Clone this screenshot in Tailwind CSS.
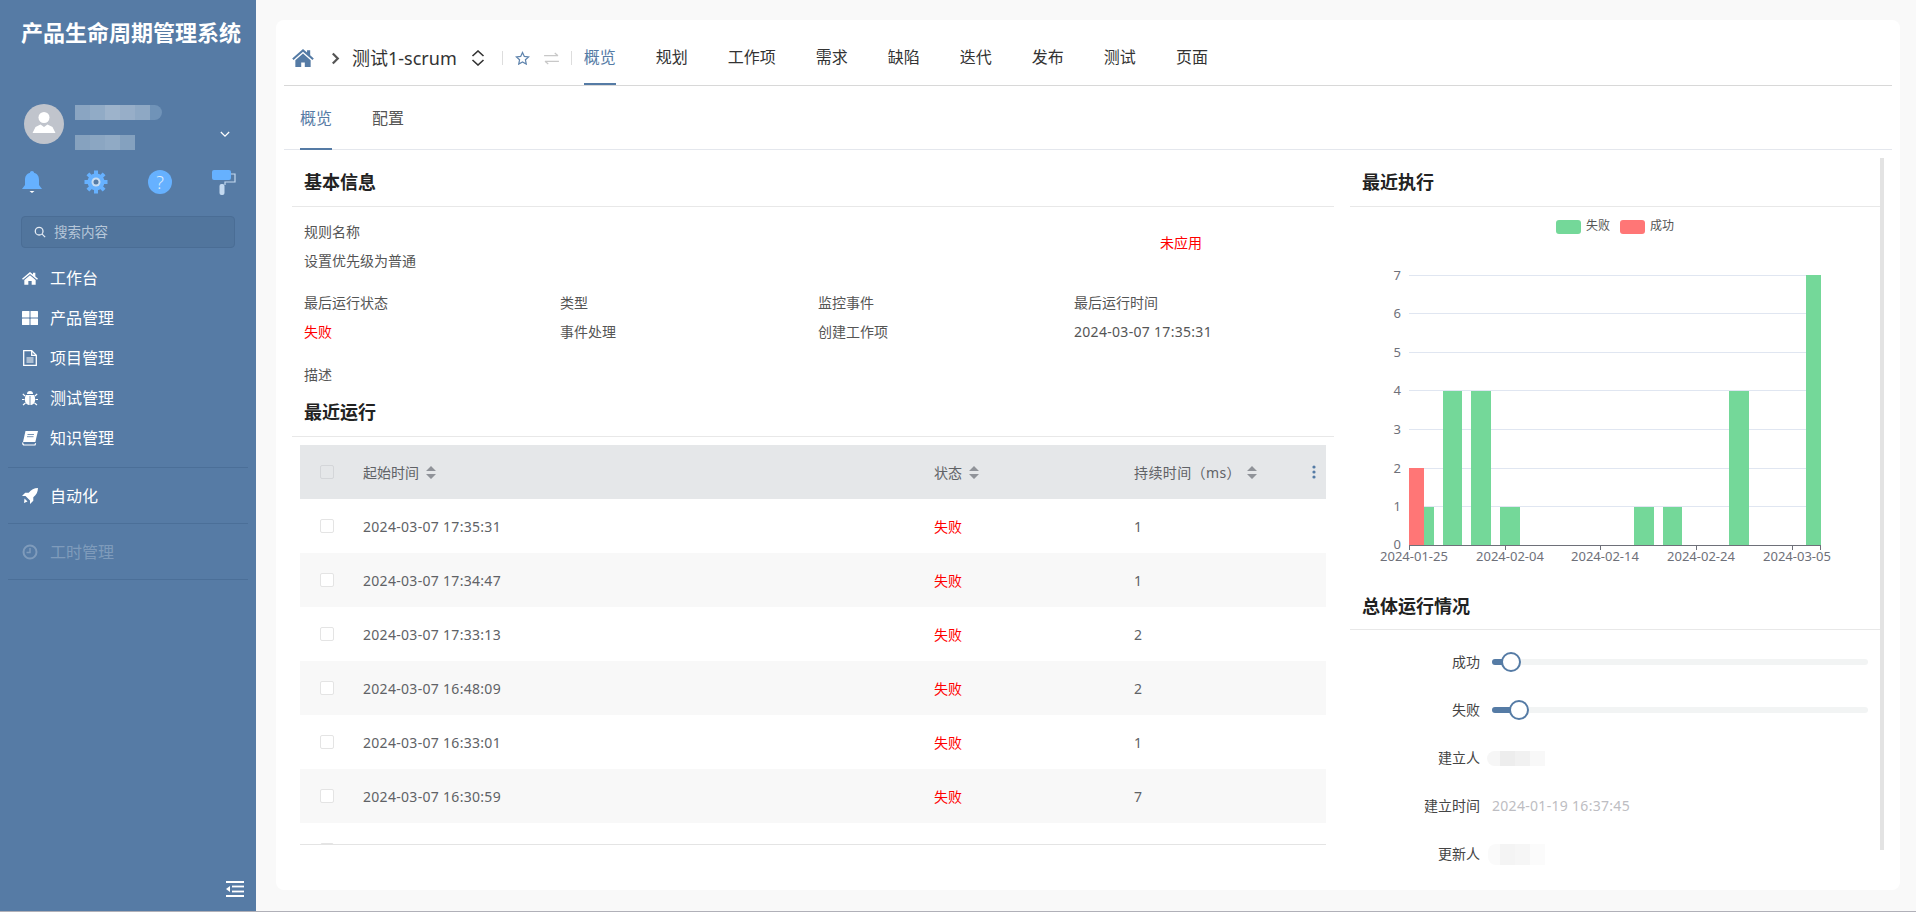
<!DOCTYPE html>
<html lang="zh-CN">
<head>
  <meta charset="UTF-8" />
  <title>产品生命周期管理系统</title>
  <script src="https://cdn.jsdelivr.net/npm/@tailwindcss/browser@4"></script>
</head>
<body class="h-screen overflow-hidden bg-[#f9f9f9] font-['Noto_Sans','Noto_Sans_CJK_SC',sans-serif] text-[14px] text-[#606266]">
<div class="flex h-[912px] border-b border-[#b0b0b8]">

  <!-- Sidebar -->
  <aside class="w-[256px] shrink-0 flex flex-col bg-[#567ba5] text-white">
    <div class="h-[64px] flex items-center pl-[21px] text-[22px] font-bold">产品生命周期管理系统</div>

    <div class="mt-[40px] h-[48px] flex items-start pl-[24px] pr-[26px]">
      <div class="w-10 h-10 rounded-full bg-[#c0c4cc] flex items-center justify-center">
        <svg viewBox="0 0 24 24" class="w-6 h-6" fill="#fff"><circle cx="12" cy="5.500" r="5.500"/><path d="M.5 21l3-6 5-2.500 3.500 2.500 3.500-2.500 5 2.500 3 6z"/></svg>
      </div>
      <div class="ml-[11px] mt-px">
        <div class="flex h-[15px] w-[87px] overflow-hidden rounded-r-lg">
          <div class="w-[15px] bg-[#8aa5c2]"></div><div class="w-[15px] bg-[#91abc6]"></div><div class="w-[15px] bg-[#9db3cb]"></div><div class="w-[15px] bg-[#97aec8]"></div><div class="w-[15px] bg-[#8ea8c4]"></div><div class="w-[12px] bg-[#7093b8]"></div>
        </div>
        <div class="flex h-[15px] w-[60px] mt-[15px]">
          <div class="w-[15px] bg-[#86a2bf]"></div><div class="w-[15px] bg-[#8ba6c2]"></div><div class="w-[15px] bg-[#90aac5]"></div><div class="w-[15px] bg-[#84a1bf]"></div>
        </div>
      </div>
      <svg viewBox="0 0 12 8" class="ml-auto mt-[27px] w-[10px] h-[7px]" fill="none" stroke="#fff" stroke-width="1.500"><path d="M1 1l5 5 5-5"/></svg>
    </div>

    <div class="mt-[17px] grid grid-cols-[64px_64px_64px_64px] h-[24px] justify-items-center items-center">
      <svg viewBox="0 0 24 24" class="w-6 h-6" fill="#66b1ff"><path d="M12 1c1.200 0 2 .8 2 1.800C17.500 3.700 19 6.500 19 10v5l3 4H2l3-4v-5c0-3.500 1.500-6.300 5-7.200C10 1.800 10.800 1 12 1z"/><path d="M9.500 21h5L12 23z" fill="#fff"/></svg>
      <svg viewBox="0 0 24 24" class="w-6 h-6"><g fill="#66b1ff"><circle cx="12" cy="12" r="8.500"/><g stroke="#66b1ff" stroke-width="4"><path d="M12 0.500v23M0.500 12h23M3.900 3.900l16.200 16.200M20.100 3.900L3.900 20.100"/></g></g><circle cx="12" cy="12" r="4.500" fill="#c7dcf2"/><circle cx="12" cy="12" r="2.500" fill="#567ba5"/></svg>
      <div class="w-6 h-6 rounded-full bg-[#66b1ff] text-[#dcebfb] text-[18px] font-light leading-6 text-center">?</div>
      <svg viewBox="0 0 24 26" class="w-6 h-[26px]"><rect x="0" y="1" width="19" height="10" rx="2" fill="#66b1ff"/><path d="M19 5h4v8h-10v3" fill="none" stroke="#c3d9f0" stroke-width="1.200"/><rect x="7.500" y="15" width="5" height="11" rx="2" fill="#c3d9f0"/></svg>
    </div>

    <div class="mt-[23px] mx-[21px] h-[32px] flex items-center pl-[12px] rounded border border-[#4a6d95] bg-[#51759d] text-[#b7c7d9] text-[13.500px]">
      <svg viewBox="0 0 14 14" class="w-3 h-3 mr-[8px]" fill="none" stroke="#e6edf5" stroke-width="1.500"><circle cx="6" cy="6" r="4.500"/><path d="M9.500 9.500l3.500 3.500"/></svg>
      搜索内容
    </div>

    <nav class="mt-[10px] text-[16px]">
      <a class="h-10 flex items-center pl-[22px] gap-[12px]">
        <svg viewBox="0 0 24 24" class="w-4 h-4" fill="#fff"><path d="M12 3L0 13l1.500 1.700L12 6l10.500 8.700L24 13l-4-3.300V4h-3.500v2.800z"/><path d="M12 8L3.500 15v7h6v-5.500h5V22h6v-7z"/></svg>
        工作台
      </a>
      <a class="h-10 flex items-center pl-[22px] gap-[12px]">
        <svg viewBox="0 0 16 14" class="w-4 h-[14px]" fill="#fff"><rect width="7.500" height="6.500" rx=".5"/><rect x="8.500" width="7.500" height="6.500" rx=".5"/><rect y="7.500" width="7.500" height="6.500" rx=".5"/><rect x="8.500" y="7.500" width="7.500" height="6.500" rx=".5"/></svg>
        产品管理
      </a>
      <a class="h-10 flex items-center pl-[22px] gap-[12px]">
        <svg viewBox="0 0 16 16" class="w-4 h-4" fill="none" stroke="#fff" stroke-width="1.300"><path d="M1.700.700h8l4.600 4.600v10H1.700z"/><path d="M9.700.700v4.600h4.600"/><path d="M4.500 8h7M4.500 10h7M4.500 12h7" stroke-width="1.100"/></svg>
        项目管理
      </a>
      <a class="h-10 flex items-center pl-[22px] gap-[12px]">
        <svg viewBox="0 0 16 16" class="w-4 h-4" fill="#fff"><path d="M5 4a3 3 0 0 1 6 0z"/><path d="M3.800 5h8.400c.7 1.500.9 3 .9 5 0 3-2.200 5-5.100 5s-5.100-2-5.100-5c0-2 .2-3.500.9-5z"/><path d="M3 6L.8 3.800M13 6l2.200-2.200M2.500 9.500H0M13.500 9.500H16M3.500 13L1 15M12.500 13l2.500 2" stroke="#fff" stroke-width="1.200"/><path d="M8 6v9" stroke="#567ba5" stroke-width=".8"/></svg>
        测试管理
      </a>
      <a class="h-10 flex items-center pl-[22px] gap-[12px]">
        <svg viewBox="0 0 16 16" class="w-4 h-4"><path d="M3.500 1H16l-2.700 11H1z" fill="#fff"/><path d="M1 12.500c-.6 1.500.2 2.500 1.500 2.500H13l.6-1.800" fill="none" stroke="#fff" stroke-width="1.200"/><path d="M5.500 4.500h6.500M5 6.700h6.500" stroke="#567ba5" stroke-width=".8"/></svg>
        知识管理
      </a>
    </nav>
    <div class="mx-2 mt-[9px] border-t border-[#4b6f98]"></div>
    <a class="mt-[8px] h-10 flex items-center pl-[22px] gap-[12px] text-[16px]">
      <svg viewBox="0 0 16 16" class="w-4 h-4" fill="#fff"><path d="M16 0c-4 .2-6.800 1.500-9.300 4.700H3.200L0 8h3.500l4.500 4.500V16l3.300-3.200v-3.500C14.500 6.800 15.800 4 16 0z"/><path d="M2.500 10.500l3 3L2 15z"/></svg>
      自动化
    </a>
    <div class="mx-2 mt-[7px] border-t border-[#4b6f98]"></div>
    <a class="mt-[8px] h-10 flex items-center pl-[22px] gap-[12px] text-[16px] text-[#7f9bbb]">
      <svg viewBox="0 0 16 16" class="w-4 h-4" fill="none" stroke="#7f9bbb" stroke-width="2"><circle cx="8" cy="8" r="6.500"/><path d="M8 4v4.500H4.500" stroke-width="1.500"/></svg>
      工时管理
    </a>
    <div class="mx-2 mt-[7px] border-t border-[#4b6f98]"></div>

    <div class="mt-auto self-end pr-[12px] pb-[14px]">
      <svg viewBox="0 0 18 16" class="w-[18px] h-4" fill="#fff"><rect width="18" height="2"/><rect x="6" y="4.600" width="12" height="1.800"/><rect x="6" y="9.600" width="12" height="1.800"/><rect y="14" width="18" height="2"/><path d="M0 8l4-3v6z"/></svg>
    </div>
  </aside>

  <!-- Main -->
  <main class="flex-1 min-w-0 pt-5 pl-5 pr-4 pb-[20px]">
    <div class="h-[870px] rounded-lg bg-white overflow-hidden">

      <header class="mx-2 h-[66px] pt-[11px] pl-2 flex items-stretch border-b border-[#d8d8d8] text-[#333]">
        <div class="flex items-center">
          <svg viewBox="0 0 24 20" class="w-[22px] h-[18px]" fill="#557ba5"><path d="M12 0L0 10.500l1.500 1.700L12 3l10.500 9.200L24 10.500l-4-3.500V1.500h-3.500V4z"/><path d="M12 5L3.500 12.500V20H10v-5h4v5h6.500v-7.500z"/></svg>
          <svg viewBox="0 0 10 14" class="ml-[17px] w-[9px] h-[13px]" fill="none" stroke="#555" stroke-width="2.500"><path d="M2 1.500L7.500 7 2 12.500"/></svg>
          <span class="ml-[12px] text-[18px] text-[#333]">测试1-scrum</span>
          <svg viewBox="0 0 14 16" class="ml-[14px] w-[14px] h-4" fill="none" stroke="#333" stroke-width="1.600"><path d="M1.500 6L7 1l5.500 5M1.500 10L7 15l5.500-5"/></svg>
          <div class="ml-[17px] w-px h-[14px] bg-[#ddd]"></div>
          <svg viewBox="0 0 24 24" class="ml-[12px] w-[15px] h-[15px]" fill="none" stroke="#5f84ad" stroke-width="2"><path d="M12 2.500l2.900 6.200 6.800.8-5 4.600 1.300 6.700-6-3.300-6 3.300 1.300-6.700-5-4.600 6.800-.8z"/></svg>
          <svg viewBox="0 0 16 14" class="ml-[14px] w-[15px] h-[13px]" fill="none" stroke="#c8c8c8" stroke-width="1.300"><path d="M0 4h15M11.500 1l3.500 3M16 10H1M4.500 13L1 10"/></svg>
          <div class="ml-[12px] w-px h-[14px] bg-[#ddd]"></div>
        </div>
        <nav class="ml-[12px] flex gap-10 text-[16px]">
          <a class="flex items-center border-b-2 border-[#557ba5] text-[#557ba5]">概览</a>
          <a class="flex items-center border-b-2 border-transparent">规划</a>
          <a class="flex items-center border-b-2 border-transparent">工作项</a>
          <a class="flex items-center border-b-2 border-transparent">需求</a>
          <a class="flex items-center border-b-2 border-transparent">缺陷</a>
          <a class="flex items-center border-b-2 border-transparent">迭代</a>
          <a class="flex items-center border-b-2 border-transparent">发布</a>
          <a class="flex items-center border-b-2 border-transparent">测试</a>
          <a class="flex items-center border-b-2 border-transparent">页面</a>
        </nav>
      </header>

      <div class="mx-2 h-[64px] pl-4 flex gap-10 border-b border-[#e4e7ed] text-[16px] text-[#555]">
        <a class="h-[64px] pt-[2px] flex items-center border-b-2 border-[#557ba5] text-[#557ba5]">概览</a>
        <a class="h-[64px] pt-[2px] flex items-center border-b-2 border-transparent">配置</a>
      </div>

      <div class="flex pl-4">
        <!-- Left column -->
        <section class="w-[1042px] shrink-0">
          <h2 class="h-[57px] pt-[8px] pl-3 flex items-center border-b border-[#e8e8e8] text-[18px] font-bold text-[#222]">基本信息</h2>
          <div class="pl-3 text-[#555] leading-5">
            <div class="mt-[15px] flex items-start">
              <div class="w-[856px]">
                <div>规则名称</div>
                <div class="mt-[9px]">设置优先级为普通</div>
              </div>
              <div class="mt-[11px] text-[#f00]">未应用</div>
            </div>
            <div class="mt-[22px] grid grid-cols-[256px_258px_256px_1fr] gap-y-[9px]">
              <div>最后运行状态</div><div>类型</div><div>监控事件</div><div>最后运行时间</div>
              <div class="text-[#f00]">失败</div><div>事件处理</div><div>创建工作项</div><div class="tracking-[0.3px]">2024-03-07 17:35:31</div>
            </div>
            <div class="mt-[23px]">描述</div>
          </div>
          <h2 class="h-[52px] pt-[13px] pl-3 border-b border-[#e8e8e8] text-[18px] leading-7 font-bold text-[#222]">最近运行</h2>

          <div class="mt-2 mx-2 h-[400px] overflow-hidden border-b border-[#e4e4e4]">
            <div class="h-[54px] grid grid-cols-[63px_571px_200px_1fr] items-center bg-[#e5e7e9]">
              <div class="ml-5 w-[14px] h-[14px] rounded-[2px] border border-[#d4d6d9] bg-[#e5e7e9]"></div>
              <div class="flex items-center gap-[7px]">起始时间
                <svg viewBox="0 0 10 13" class="w-[10px] h-[13px]" fill="#909399"><path d="M5 0l5 5H0zM0 8h10l-5 5z"/></svg>
              </div>
              <div class="flex items-center gap-[7px]">状态
                <svg viewBox="0 0 10 13" class="w-[10px] h-[13px]" fill="#909399"><path d="M5 0l5 5H0zM0 8h10l-5 5z"/></svg>
              </div>
              <div class="flex items-center">
                <span class="tracking-[0.4px]">持续时间（ms）</span>
                <svg viewBox="0 0 10 13" class="ml-[6px] w-[10px] h-[13px]" fill="#909399"><path d="M5 0l5 5H0zM0 8h10l-5 5z"/></svg>
                <svg viewBox="0 0 4 14" class="ml-auto mr-[10px] w-1 h-[14px]" fill="#557ba5"><circle cx="2" cy="2" r="1.600"/><circle cx="2" cy="7" r="1.600"/><circle cx="2" cy="12" r="1.600"/></svg>
              </div>
            </div>
            <div class="h-[54px] grid grid-cols-[63px_571px_200px_1fr] items-center bg-white">
              <div class="ml-5 w-[14px] h-[14px] rounded-[2px] border border-[#e4e4e4] bg-white"></div>
              <div class="tracking-[0.3px]">2024-03-07 17:35:31</div><div class="text-[#f00]">失败</div><div>1</div>
            </div>
            <div class="h-[54px] grid grid-cols-[63px_571px_200px_1fr] items-center bg-[#f8f8f8]">
              <div class="ml-5 w-[14px] h-[14px] rounded-[2px] border border-[#e4e4e4] bg-white"></div>
              <div class="tracking-[0.3px]">2024-03-07 17:34:47</div><div class="text-[#f00]">失败</div><div>1</div>
            </div>
            <div class="h-[54px] grid grid-cols-[63px_571px_200px_1fr] items-center bg-white">
              <div class="ml-5 w-[14px] h-[14px] rounded-[2px] border border-[#e4e4e4] bg-white"></div>
              <div class="tracking-[0.3px]">2024-03-07 17:33:13</div><div class="text-[#f00]">失败</div><div>2</div>
            </div>
            <div class="h-[54px] grid grid-cols-[63px_571px_200px_1fr] items-center bg-[#f8f8f8]">
              <div class="ml-5 w-[14px] h-[14px] rounded-[2px] border border-[#e4e4e4] bg-white"></div>
              <div class="tracking-[0.3px]">2024-03-07 16:48:09</div><div class="text-[#f00]">失败</div><div>2</div>
            </div>
            <div class="h-[54px] grid grid-cols-[63px_571px_200px_1fr] items-center bg-white">
              <div class="ml-5 w-[14px] h-[14px] rounded-[2px] border border-[#e4e4e4] bg-white"></div>
              <div class="tracking-[0.3px]">2024-03-07 16:33:01</div><div class="text-[#f00]">失败</div><div>1</div>
            </div>
            <div class="h-[54px] grid grid-cols-[63px_571px_200px_1fr] items-center bg-[#f8f8f8]">
              <div class="ml-5 w-[14px] h-[14px] rounded-[2px] border border-[#e4e4e4] bg-white"></div>
              <div class="tracking-[0.3px]">2024-03-07 16:30:59</div><div class="text-[#f00]">失败</div><div>7</div>
            </div>
            <div class="h-[54px] grid grid-cols-[63px_571px_200px_1fr] items-center bg-white">
              <div class="ml-5 w-[14px] h-[14px] rounded-[2px] border border-[#e4e4e4] bg-white"></div>
            </div>
          </div>
        </section>

        <!-- Right column -->
        <section class="ml-4 w-[530px] shrink-0 relative">
          <div class="absolute left-[530px] top-2 w-1 h-[692px] bg-[#e3e3e3]"></div>
          <h2 class="h-[57px] pt-[8px] pl-3 flex items-center border-b border-[#e8e8e8] text-[18px] font-bold text-[#222]">最近执行</h2>

          <svg viewBox="1350 207 530 376" class="block w-[530px] h-[376px]" font-size="13" fill="#6e7079">
            <rect x="1556" y="220" width="25" height="14" rx="3" fill="#74d899"/>
            <text x="1586" y="230" fill="#555" font-size="12">失败</text>
            <rect x="1620" y="220" width="25" height="14" rx="3" fill="#ff7676"/>
            <text x="1650" y="230" fill="#555" font-size="12">成功</text>

            <g stroke="#e0e6f1" stroke-width="1">
              <path d="M1409 275.500H1820M1409 313.500H1820M1409 352.500H1820M1409 390.500H1820M1409 429.500H1820M1409 468.500H1820M1409 506.500H1820"/>
            </g>
            <g text-anchor="end">
              <text x="1401" y="280">7</text>
              <text x="1401" y="318">6</text>
              <text x="1401" y="357">5</text>
              <text x="1401" y="395">4</text>
              <text x="1401" y="434">3</text>
              <text x="1401" y="473">2</text>
              <text x="1401" y="511">1</text>
              <text x="1401" y="549">0</text>
            </g>
            <g fill="#74d899">
              <rect x="1424" y="507" width="10" height="38"/>
              <rect x="1443" y="391" width="19" height="154"/>
              <rect x="1471" y="391" width="20" height="154"/>
              <rect x="1500" y="507" width="20" height="38"/>
              <rect x="1634" y="507" width="20" height="38"/>
              <rect x="1663" y="507" width="19" height="38"/>
              <rect x="1729" y="391" width="20" height="154"/>
              <rect x="1806" y="275" width="15" height="270"/>
            </g>
            <rect x="1409" y="468" width="15" height="77" fill="#ff7676"/>
            <path d="M1409 545.500H1821M1409.500 545v5M1505.500 545v5M1600.500 545v5M1696.500 545v5M1792.500 545v5M1820.500 545v5" stroke="#6e7079" fill="none"/>
            <g text-anchor="middle">
              <text x="1414" y="561">2024-01-25</text>
              <text x="1510" y="561">2024-02-04</text>
              <text x="1605" y="561">2024-02-14</text>
              <text x="1701" y="561">2024-02-24</text>
              <text x="1797" y="561">2024-03-05</text>
            </g>
          </svg>

          <h2 class="h-[47px] pt-[9px] pl-3 border-b border-[#e8e8e8] text-[18px] leading-7 font-bold text-[#222]">总体运行情况</h2>

          <div class="pt-2 text-[#444]">
            <div class="h-12 flex items-center">
              <div class="w-[130px] pb-[2px] text-right">成功</div>
              <div class="ml-3 relative w-[376px] h-[6px] rounded-full bg-[#f2f4f4]">
                <div class="absolute left-0 top-0 h-[6px] w-[19px] rounded-full bg-[#557ba5]"></div>
                <div class="absolute left-[9px] top-[-7px] w-5 h-5 rounded-full border-2 border-[#557ba5] bg-white"></div>
              </div>
            </div>
            <div class="h-12 flex items-center">
              <div class="w-[130px] pb-[2px] text-right">失败</div>
              <div class="ml-3 relative w-[376px] h-[6px] rounded-full bg-[#f2f4f4]">
                <div class="absolute left-0 top-0 h-[6px] w-[27px] rounded-full bg-[#557ba5]"></div>
                <div class="absolute left-[17px] top-[-7px] w-5 h-5 rounded-full border-2 border-[#557ba5] bg-white"></div>
              </div>
            </div>
            <div class="h-12 flex items-center">
              <div class="w-[130px] pb-[2px] text-right">建立人</div>
              <div class="ml-[7px] flex h-[15px]">
                <div class="w-[13px] bg-[#f6f6f6] rounded-l-lg"></div><div class="w-[15px] bg-[#ededed]"></div><div class="w-[15px] bg-[#f1f1f1]"></div><div class="w-[15px] bg-[#f8f8f8]"></div>
              </div>
            </div>
            <div class="h-12 flex items-center">
              <div class="w-[130px] pb-[2px] text-right">建立时间</div>
              <div class="ml-3 pb-[2px] tracking-[0.3px] text-[#bdbdc2]">2024-01-19 16:37:45</div>
            </div>
            <div class="h-12 flex items-center">
              <div class="w-[130px] pb-[2px] text-right">更新人</div>
              <div class="ml-2 flex h-[21px]">
                <div class="w-[12px] bg-[#fafafa] rounded-l-lg"></div><div class="w-[15px] bg-[#f4f4f4]"></div><div class="w-[15px] bg-[#f6f6f6]"></div><div class="w-[15px] bg-[#fbfbfb]"></div>
              </div>
            </div>
          </div>
        </section>
      </div>
    </div>
  </main>
</div>
</body>
</html>
